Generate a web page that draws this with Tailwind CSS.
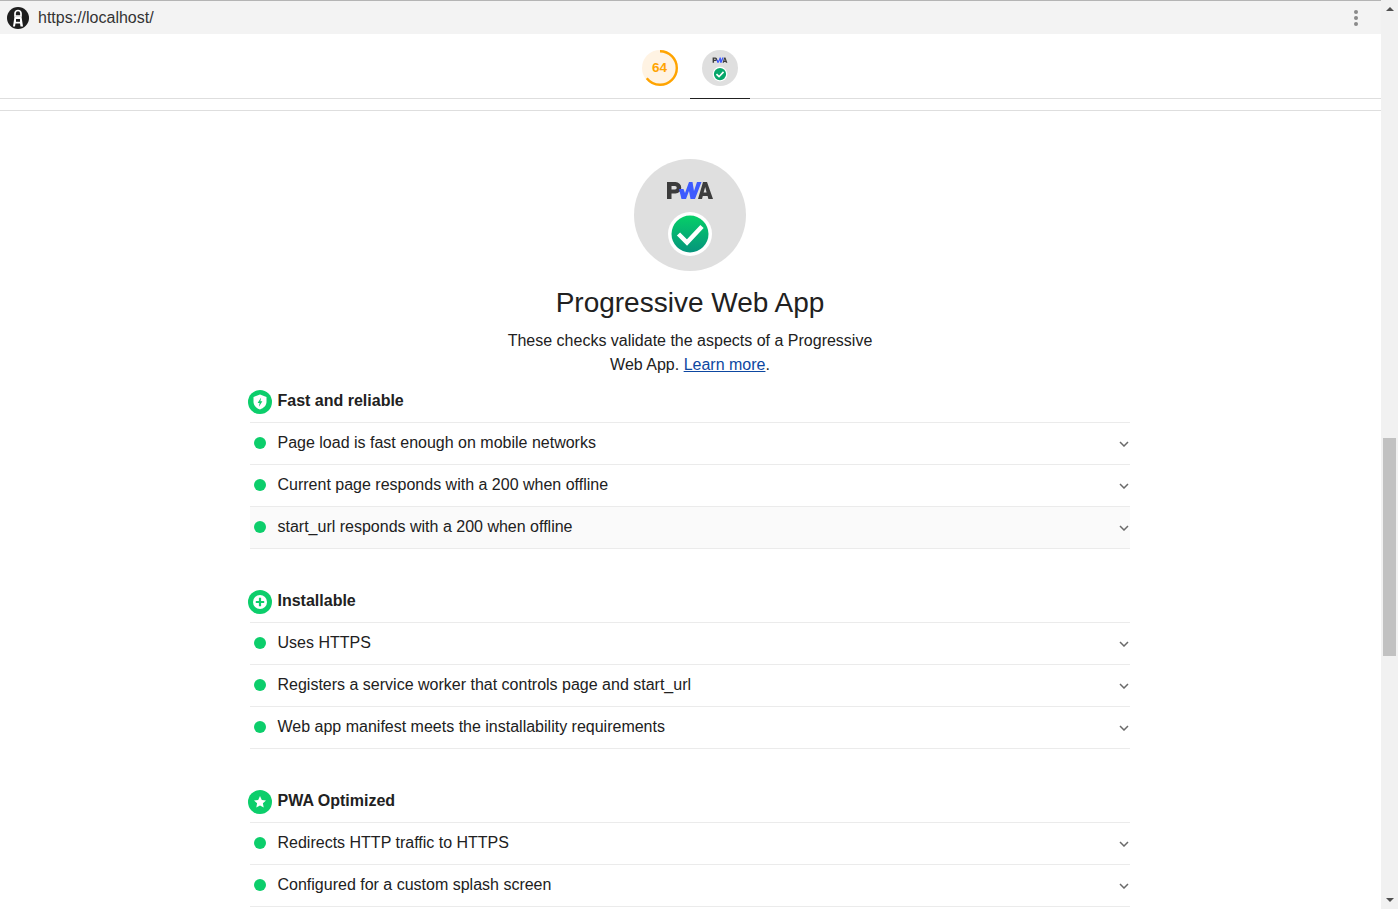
<!DOCTYPE html>
<html lang="en">
<head>
<meta charset="utf-8">
<title>Lighthouse PWA</title>
<script src="https://cdn.jsdelivr.net/npm/@tailwindcss/browser@4"></script>
</head>
<body class="h-[909px] overflow-hidden bg-white font-['Liberation_Sans',sans-serif] text-[#212121]">
<div class="flex h-[909px]">
  <main class="w-[1381px] h-[909px] overflow-hidden">
    <header class="h-[34px] border-t border-t-[#b4b4b4] bg-[#f3f3f3] flex items-center pl-[7px] pr-[23px]">
      <svg class="w-[22px] h-[22px]" viewBox="0 0 22 22">
        <circle cx="11" cy="11" r="11" fill="#1e1e1e"/>
        <path d="M11 3.500a3 3 0 0 1 3 3V9H8V6.500a3 3 0 0 1 3-3z" fill="none" stroke="#fff" stroke-width="1.700"/>
        <path d="M7.500 9.500h7l1.500 10h-2.500l-.5-3h-4.500l-.5 3H6z" fill="#fff"/>
        <path d="M9 12h4v2.800H9z" fill="#1e1e1e"/>
      </svg>
      <span class="ml-[9px] text-[16px] text-[#333]">https://localhost/</span>
      <svg class="ml-auto w-[4px] h-[16px]" viewBox="0 0 4 16"><circle cx="2" cy="2" r="2" fill="#8a8a8a"/><circle cx="2" cy="8" r="2" fill="#8a8a8a"/><circle cx="2" cy="14" r="2" fill="#8a8a8a"/></svg>
    </header>

    <nav class="h-[65px] border-b border-[#dedede] flex justify-center pr-[1px]">
      <a class="w-[60px] h-[65px] flex items-center justify-center pt-[3px]">
        <svg class="w-[36px] h-[36px]" viewBox="0 0 36 36">
          <circle cx="18" cy="18" r="18" fill="#fff3e3"/>
          <circle cx="18" cy="18" r="16.800" fill="none" stroke="#ffa400" stroke-width="2.400" stroke-dasharray="67.600 200" transform="rotate(-90 18 18)"/>
          <text x="17.500" y="22" text-anchor="middle" font-size="13.500" font-weight="700" fill="#ffa400" font-family="Liberation Sans">64</text>
        </svg>
      </a>
      <a class="w-[60px] h-[65px] flex items-center justify-center border-b border-[#212121] pt-[4px]">
        <svg class="w-[36px] h-[36px]" viewBox="0 0 112 112">
          <circle cx="56" cy="56" r="56" fill="#dfdfdf"/>
          <path d="M33 40V23h8.500a5.500 5.500 0 0 1 0 11.500h-4V40z M37.500 27v3.500H41a1.750 1.750 0 0 0 0-3.500z" fill="#3c3c3c" fill-rule="evenodd"/>
          <path d="M45 30h4.500l1.500 4 4-11h3.500l1.500 9 3-9h4.500L61 40h-4.500L55 32l-3 8h-4.500z" fill="#3d5afe"/>
          <path d="M64 40l5-17h4l6 17h-4.600l-.8-3h-4.800l-.8 3z M69.600 33.500h3L71.200 28z" fill="#3c3c3c" fill-rule="evenodd"/>
          <circle cx="56" cy="75" r="23" fill="#fff"/>
          <circle cx="56" cy="75" r="19" fill="#06a76a"/>
          <path d="M45 75l8 8 14-15" fill="none" stroke="#fff" stroke-width="5"/>
        </svg>
      </a>
    </nav>

    <div class="h-[12px] border-b border-[#dedede]"></div>

    <section class="w-[880px] ml-[250px]">
      <div class="flex flex-col items-center pt-[48px]">
        <svg class="w-[112px] h-[112px]" viewBox="0 0 112 112">
          <defs><linearGradient id="ck" x1="0" y1="0" x2="0" y2="1"><stop offset="0" stop-color="#06cf68"/><stop offset="1" stop-color="#05947c"/></linearGradient></defs>
          <circle cx="56" cy="56" r="56" fill="#dfdfdf"/>
          <path d="M33 40V23h8.500a5.500 5.500 0 0 1 0 11.500h-4V40z M37.500 27v3.500H41a1.750 1.750 0 0 0 0-3.500z" fill="#3c3c3c" fill-rule="evenodd"/>
          <path d="M45 30h4.500l1.500 4 4-11h3.500l1.500 9 3-9h4.500L61 40h-4.500L55 32l-3 8h-4.500z" fill="#3d5afe"/>
          <path d="M64 40l5-17h4l6 17h-4.600l-.8-3h-4.800l-.8 3z M69.600 33.500h3L71.200 28z" fill="#3c3c3c" fill-rule="evenodd"/>
          <circle cx="56" cy="75" r="22" fill="#fff"/>
          <circle cx="56" cy="75" r="18.500" fill="url(#ck)"/>
          <path d="M44.500 75l8.500 8.500 15-16" fill="none" stroke="#fff" stroke-width="4.500"/>
        </svg>
        <h1 class="mt-[14px] text-[28px] leading-[36px] font-normal">Progressive Web App</h1>
        <p class="mt-[8px] w-[400px] text-center text-[16px] leading-[24px]">These checks validate the aspects of a Progressive Web App. <a class="text-[#0d47a1] underline">Learn more</a>.</p>
      </div>

      <div class="mt-[3px]">
        <div class="h-[43px] border-b border-[#ebebeb] flex items-start pt-[12px] relative">
          <svg class="absolute left-[-2px] top-[10px] w-[24px] h-[24px]" viewBox="0 0 24 24">
            <circle cx="12" cy="12" r="12" fill="#0cce6b"/>
            <path d="M12 4.500l6.500 2.400v4.900c0 3.700-2.700 6.200-6.500 7.700-3.800-1.500-6.500-4-6.500-7.700V6.900z" fill="#fff"/>
            <path d="M13.100 7.500l-3.500 5.500h2l-.7 3.800 3.500-5.600h-2z" fill="#0cce6b"/>
          </svg>
          <h2 class="ml-[27.500px] text-[16px] leading-[16px] mt-[1px] font-bold">Fast and reliable</h2>
        </div>
        <div class="h-[42px] pb-[2px] border-b border-[#ebebeb] flex items-center"><span class="w-[12px] h-[12px] ml-[4px] rounded-full bg-[#0cce6b]"></span><span class="ml-[11.500px] text-[16px]">Page load is fast enough on mobile networks</span><svg class="ml-auto mr-[1px] w-[10px] h-[6px] mt-[2px]" viewBox="0 0 10 6"><path d="M1 1l4 4 4-4" fill="none" stroke="#6a6a6a" stroke-width="1.500"/></svg></div>
        <div class="h-[42px] pb-[2px] border-b border-[#ebebeb] flex items-center"><span class="w-[12px] h-[12px] ml-[4px] rounded-full bg-[#0cce6b]"></span><span class="ml-[11.500px] text-[16px]">Current page responds with a 200 when offline</span><svg class="ml-auto mr-[1px] w-[10px] h-[6px] mt-[2px]" viewBox="0 0 10 6"><path d="M1 1l4 4 4-4" fill="none" stroke="#6a6a6a" stroke-width="1.500"/></svg></div>
        <div class="h-[42px] pb-[2px] border-b border-[#ebebeb] bg-[#fafafa] flex items-center"><span class="w-[12px] h-[12px] ml-[4px] rounded-full bg-[#0cce6b]"></span><span class="ml-[11.500px] text-[16px]">start_url responds with a 200 when offline</span><svg class="ml-auto mr-[1px] w-[10px] h-[6px] mt-[2px]" viewBox="0 0 10 6"><path d="M1 1l4 4 4-4" fill="none" stroke="#6a6a6a" stroke-width="1.500"/></svg></div>
      </div>

      <div class="mt-[26px]">
        <div class="h-[48px] border-b border-[#ebebeb] flex items-start pt-[18px] relative">
          <svg class="absolute left-[-2px] top-[15px] w-[24px] h-[24px]" viewBox="0 0 24 24">
            <circle cx="12" cy="12" r="12" fill="#0cce6b"/>
            <circle cx="12" cy="12" r="7" fill="#fff"/>
            <path d="M12 7.800v8.400M7.800 12h8.400" stroke="#0cce6b" stroke-width="2.200"/>
          </svg>
          <h2 class="ml-[27.500px] text-[16px] leading-[16px] font-bold">Installable</h2>
        </div>
        <div class="h-[42px] pb-[2px] border-b border-[#ebebeb] flex items-center"><span class="w-[12px] h-[12px] ml-[4px] rounded-full bg-[#0cce6b]"></span><span class="ml-[11.500px] text-[16px]">Uses HTTPS</span><svg class="ml-auto mr-[1px] w-[10px] h-[6px] mt-[2px]" viewBox="0 0 10 6"><path d="M1 1l4 4 4-4" fill="none" stroke="#6a6a6a" stroke-width="1.500"/></svg></div>
        <div class="h-[42px] pb-[2px] border-b border-[#ebebeb] flex items-center"><span class="w-[12px] h-[12px] ml-[4px] rounded-full bg-[#0cce6b]"></span><span class="ml-[11.500px] text-[16px]">Registers a service worker that controls page and start_url</span><svg class="ml-auto mr-[1px] w-[10px] h-[6px] mt-[2px]" viewBox="0 0 10 6"><path d="M1 1l4 4 4-4" fill="none" stroke="#6a6a6a" stroke-width="1.500"/></svg></div>
        <div class="h-[42px] pb-[2px] border-b border-[#ebebeb] flex items-center"><span class="w-[12px] h-[12px] ml-[4px] rounded-full bg-[#0cce6b]"></span><span class="ml-[11.500px] text-[16px]">Web app manifest meets the installability requirements</span><svg class="ml-auto mr-[1px] w-[10px] h-[6px] mt-[2px]" viewBox="0 0 10 6"><path d="M1 1l4 4 4-4" fill="none" stroke="#6a6a6a" stroke-width="1.500"/></svg></div>
      </div>

      <div class="mt-[26px]">
        <div class="h-[48px] border-b border-[#ebebeb] flex items-start pt-[18px] relative">
          <svg class="absolute left-[-2px] top-[15px] w-[24px] h-[24px]" viewBox="0 0 24 24">
            <circle cx="12" cy="12" r="12" fill="#0cce6b"/>
            <path d="M12 6l1.800 3.900 4.200.5-3.100 2.900.8 4.200-3.700-2.100-3.700 2.100.8-4.200-3.100-2.900 4.200-.5z" fill="#fff"/>
          </svg>
          <h2 class="ml-[27.500px] text-[16px] leading-[16px] font-bold">PWA Optimized</h2>
        </div>
        <div class="h-[42px] pb-[2px] border-b border-[#ebebeb] flex items-center"><span class="w-[12px] h-[12px] ml-[4px] rounded-full bg-[#0cce6b]"></span><span class="ml-[11.500px] text-[16px]">Redirects HTTP traffic to HTTPS</span><svg class="ml-auto mr-[1px] w-[10px] h-[6px] mt-[2px]" viewBox="0 0 10 6"><path d="M1 1l4 4 4-4" fill="none" stroke="#6a6a6a" stroke-width="1.500"/></svg></div>
        <div class="h-[42px] pb-[2px] border-b border-[#ebebeb] flex items-center"><span class="w-[12px] h-[12px] ml-[4px] rounded-full bg-[#0cce6b]"></span><span class="ml-[11.500px] text-[16px]">Configured for a custom splash screen</span><svg class="ml-auto mr-[1px] w-[10px] h-[6px] mt-[2px]" viewBox="0 0 10 6"><path d="M1 1l4 4 4-4" fill="none" stroke="#6a6a6a" stroke-width="1.500"/></svg></div>
      </div>
    </section>
  </main>

  <aside class="w-[17px] h-[909px] bg-[#f1f1f1] flex flex-col items-center">
    <svg class="mt-[7px] w-[8px] h-[4px]" viewBox="0 0 8 4"><path d="M0 4l4-4 4 4z" fill="#505050"/></svg>
    <div class="mt-[427px] w-[13px] h-[218px] bg-[#c1c1c1]"></div>
    <svg class="mt-[242px] w-[8px] h-[4px]" viewBox="0 0 8 4"><path d="M0 0l4 4 4-4z" fill="#505050"/></svg>
  </aside>
</div>
</body>
</html>
